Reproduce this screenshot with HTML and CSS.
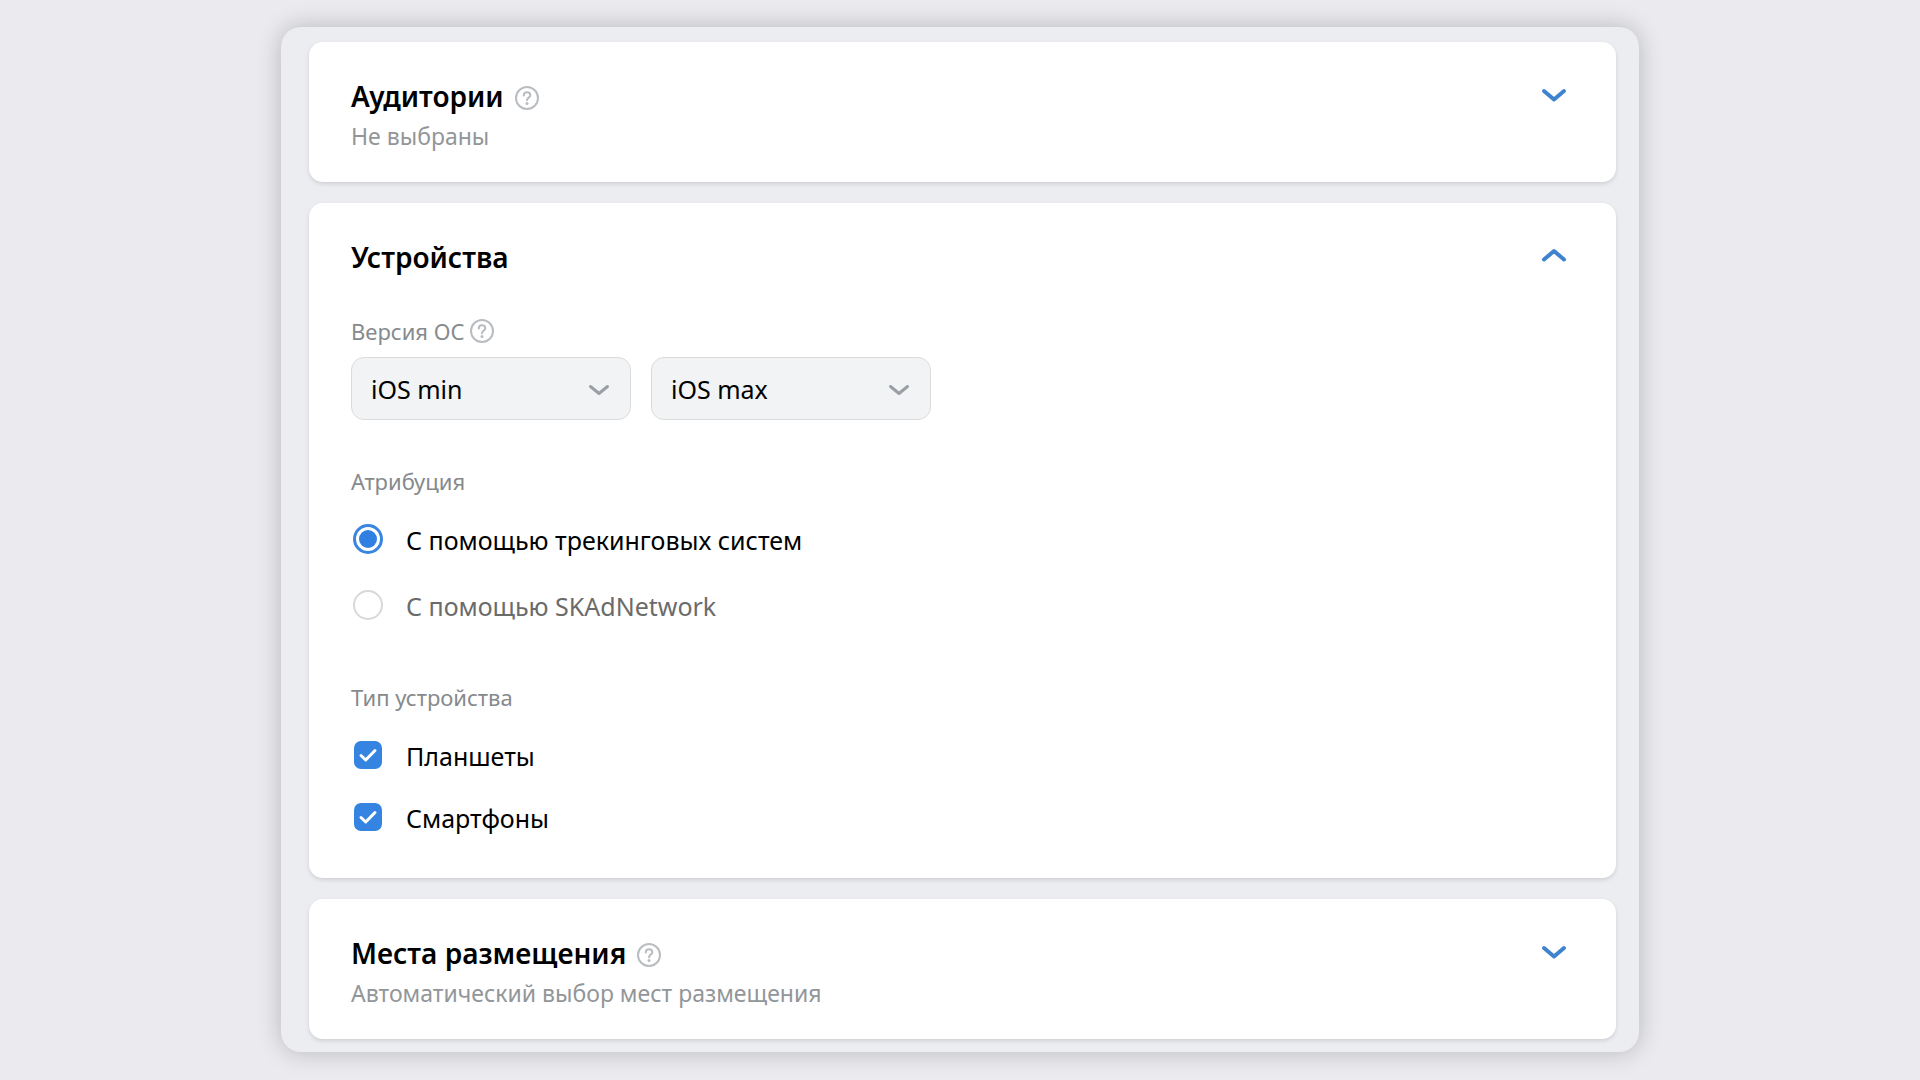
FILE: index.html
```html
<!DOCTYPE html>
<html lang="ru">
<head>
    <meta charset="UTF-8">
    <meta name="viewport" content="width=device-width, initial-scale=1.0">
    <title>Настройка группы объявлений</title>
    <link rel="stylesheet" href="styles.css">
</head>
<body>
    <main class="panel">
        <section class="card">
            <div class="card-header">
                <h2>Аудитории</h2>
                <button type="button" class="help" aria-label="Подсказка">
                    <svg viewBox="0 0 24 24"><circle cx="12" cy="12" r="11"/><path d="M8.8 9.4C8.8 7.3 10.2 6.2 12 6.2s3.3 1.1 3.3 3c0 2.4-3.3 2.5-3.3 5"/><circle class="dot" cx="12" cy="17.6" r="1.5"/></svg>
                </button>
                <button type="button" class="toggle" aria-expanded="false" aria-label="Развернуть">
                    <svg viewBox="0 0 32 32"><path d="M6 11l10 8.5L26 11"/></svg>
                </button>
            </div>
            <p class="summary">Не выбраны</p>
        </section>

        <section class="card card-open">
            <div class="card-header">
                <h2>Устройства</h2>
                <button type="button" class="toggle" aria-expanded="true" aria-label="Свернуть">
                    <svg viewBox="0 0 32 32"><path d="M6 18.5L16 10l10 8.5"/></svg>
                </button>
            </div>

            <form>
                <fieldset class="versions">
                    <legend>
                        Версия ОС
                        <button type="button" class="help" aria-label="Подсказка">
                            <svg viewBox="0 0 24 24"><circle cx="12" cy="12" r="11"/><path d="M8.8 9.4C8.8 7.3 10.2 6.2 12 6.2s3.3 1.1 3.3 3c0 2.4-3.3 2.5-3.3 5"/><circle class="dot" cx="12" cy="17.6" r="1.5"/></svg>
                        </button>
                    </legend>
                    <div class="selects">
                        <div class="select">
                            <select id="iosMin" aria-label="Минимальная версия iOS">
                                <option>iOS min</option>
                            </select>
                            <svg viewBox="0 0 24 24"><path d="M3.5 9.5L12 16.5l8.5-7"/></svg>
                        </div>
                        <div class="select">
                            <select id="iosMax" aria-label="Максимальная версия iOS">
                                <option>iOS max</option>
                            </select>
                            <svg viewBox="0 0 24 24"><path d="M3.5 9.5L12 16.5l8.5-7"/></svg>
                        </div>
                    </div>
                </fieldset>

                <fieldset class="attribution">
                    <legend>Атрибуция</legend>
                    <div class="options">
                        <label class="option">
                            <input type="radio" name="attribution" checked>
                            <span class="text">С помощью трекинговых систем</span>
                        </label>
                        <label class="option">
                            <input type="radio" name="attribution">
                            <span class="text muted">С помощью SKAdNetwork</span>
                        </label>
                    </div>
                </fieldset>

                <fieldset class="devices">
                    <legend>Тип устройства</legend>
                    <div class="options">
                        <label class="option">
                            <span class="check">
                                <input type="checkbox" name="tablets" checked>
                                <svg viewBox="0 0 28 28"><path d="M7 14.5l4.7 4.5L21 9.5"/></svg>
                            </span>
                            <span class="text">Планшеты</span>
                        </label>
                        <label class="option">
                            <span class="check">
                                <input type="checkbox" name="phones" checked>
                                <svg viewBox="0 0 28 28"><path d="M7 14.5l4.7 4.5L21 9.5"/></svg>
                            </span>
                            <span class="text">Смартфоны</span>
                        </label>
                    </div>
                </fieldset>
            </form>
        </section>

        <section class="card">
            <div class="card-header">
                <h2>Места размещения</h2>
                <button type="button" class="help" aria-label="Подсказка">
                    <svg viewBox="0 0 24 24"><circle cx="12" cy="12" r="11"/><path d="M8.8 9.4C8.8 7.3 10.2 6.2 12 6.2s3.3 1.1 3.3 3c0 2.4-3.3 2.5-3.3 5"/><circle class="dot" cx="12" cy="17.6" r="1.5"/></svg>
                </button>
                <button type="button" class="toggle" aria-expanded="false" aria-label="Развернуть">
                    <svg viewBox="0 0 32 32"><path d="M6 11l10 8.5L26 11"/></svg>
                </button>
            </div>
            <p class="summary">Автоматический выбор мест размещения</p>
        </section>
    </main>
</body>
</html>
```
FILE: styles.css
```css
* {
    box-sizing: border-box;
}
body {
    margin: 0;
    padding: 27px 20px;
    font-family: "Noto Sans", "Open Sans", sans-serif;
    font-size: 25px;
    line-height: 36px;
    color: #000;
    background: #ebeaef;
}
svg {
    display: block;
    fill: none;
    stroke: currentColor;
    stroke-linecap: round;
    stroke-linejoin: round;
}
button {
    display: flex;
    align-items: center;
    padding: 0;
    border: none;
    background: none;
    cursor: pointer;
}
.panel {
    display: flex;
    flex-direction: column;
    gap: 21px;
    max-width: 1358px;
    margin: 0 auto;
    padding: 15px 23px 13px 28px;
    border-radius: 20px;
    background: #ebedf0;
    box-shadow: 0 0 24px rgba(0, 0, 0, 0.22);
}
.card {
    padding: 32px 46px 28px 42px;
    border-radius: 14px;
    background: #fff;
    box-shadow: 0 2px 4px rgba(0, 0, 0, 0.12);
}
.card-open {
    padding-bottom: 42px;
}
.card-header {
    display: flex;
    align-items: center;
    height: 44px;
}
h2 {
    margin: 0;
    font-size: 28px;
    font-weight: 600;
    line-height: 44px;
}
.summary {
    margin: 0;
    font-size: 23px;
    color: #929699;
}
.help {
    color: #b9bcc0;
}
.help svg {
    width: 24px;
    height: 24px;
    stroke-width: 2;
}
.help .dot {
    fill: currentColor;
    stroke: none;
}
.card-header .help {
    margin-left: 11px;
    padding-top: 4px;
}
.toggle {
    margin-left: auto;
    color: #3f83cf;
}
.toggle svg {
    width: 32px;
    height: 32px;
    stroke-width: 4;
}

/* form */
fieldset {
    min-width: 0;
    margin: 0;
    padding: 0;
    border: none;
}
legend {
    display: flex;
    align-items: center;
    gap: 5px;
    padding: 0;
    font-size: 22px;
    line-height: 32px;
    color: #868a8d;
}
.versions {
    margin-top: 36px;
}
.selects {
    display: flex;
    flex-wrap: wrap;
    gap: 20px;
    padding-top: 10px;
}
.select {
    display: grid;
    align-items: center;
    width: 280px;
}
.select select,
.select svg {
    grid-area: 1 / 1;
}
.select select {
    width: 100%;
    height: 63px;
    padding: 0 52px 0 19px;
    font: inherit;
    color: #000;
    border: 1px solid #d9dbdd;
    border-radius: 13px;
    background: #f2f3f5;
    appearance: none;
}
.select svg {
    justify-self: end;
    width: 24px;
    height: 24px;
    margin-right: 20px;
    color: #9a9ea5;
    stroke-width: 3;
    pointer-events: none;
}
.attribution {
    margin-top: 45px;
}
.devices {
    margin-top: 57px;
}
.options {
    display: flex;
    flex-direction: column;
    align-items: flex-start;
    gap: 28px;
    padding-top: 23px;
}
.devices .options {
    gap: 24px;
}
.option {
    display: flex;
    align-items: center;
    gap: 23px;
    padding-left: 2px;
    cursor: pointer;
}
.text {
    padding-top: 2px;
}
.muted {
    color: #6b6b6b;
}
input {
    appearance: none;
    margin: 0;
}
input[type="radio"] {
    width: 30px;
    height: 30px;
    border: 2px solid #d7d8da;
    border-radius: 50%;
}
input[type="radio"]:checked {
    padding: 3px;
    border: 3px solid #3985e0;
    background: #2f80e2 content-box;
}
.check {
    display: grid;
    width: 30px;
    place-items: center;
}
.check input,
.check svg {
    grid-area: 1 / 1;
    width: 28px;
    height: 28px;
}
.check input {
    border: 2px solid #d7d8da;
    border-radius: 7px;
}
.check input:checked {
    border-color: #3584e2;
    background: #3584e2;
}
.check svg {
    color: #fff;
    stroke-width: 3;
    pointer-events: none;
}
```
